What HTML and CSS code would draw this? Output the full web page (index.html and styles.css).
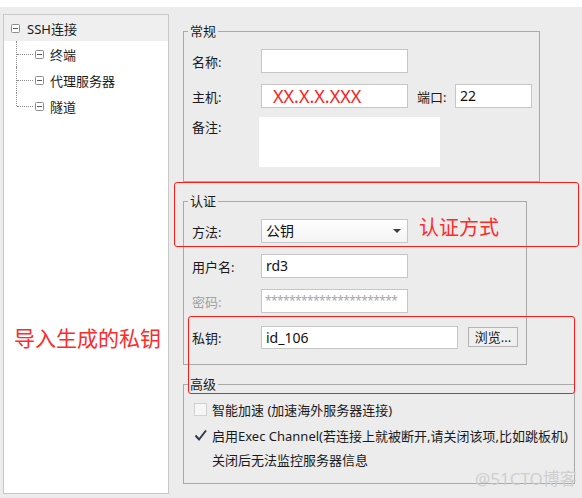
FILE: index.html
```html
<!DOCTYPE html>
<html lang="zh">
<head>
<meta charset="utf-8">
<title>SSH连接</title>
<link rel="stylesheet" href="styles.css">
</head>
<body>
<div class="topbar"></div>
<div class="main">
  <div class="tree">
    <div class="tree-root">
      <svg class="minus" width="9" height="9" viewBox="0 0 9 9"><rect x="0.5" y="0.5" width="8" height="8" rx="1" fill="#fff" stroke="#8c8c8c"/><line x1="2" y1="4.5" x2="7" y2="4.5" stroke="#5a5a5a"/></svg>
      <span>SSH连接</span>
    </div>
    <div class="tree-child">
      <svg class="minus" width="9" height="9" viewBox="0 0 9 9"><rect x="0.5" y="0.5" width="8" height="8" rx="1" fill="#fff" stroke="#8c8c8c"/><line x1="2" y1="4.5" x2="7" y2="4.5" stroke="#5a5a5a"/></svg>
      <span>终端</span>
    </div>
    <div class="tree-child">
      <svg class="minus" width="9" height="9" viewBox="0 0 9 9"><rect x="0.5" y="0.5" width="8" height="8" rx="1" fill="#fff" stroke="#8c8c8c"/><line x1="2" y1="4.5" x2="7" y2="4.5" stroke="#5a5a5a"/></svg>
      <span>代理服务器</span>
    </div>
    <div class="tree-child last">
      <svg class="minus" width="9" height="9" viewBox="0 0 9 9"><rect x="0.5" y="0.5" width="8" height="8" rx="1" fill="#fff" stroke="#8c8c8c"/><line x1="2" y1="4.5" x2="7" y2="4.5" stroke="#5a5a5a"/></svg>
      <span>隧道</span>
    </div>
  </div>

  <div class="settings">
    <fieldset class="group general">
      <legend>常规</legend>
      <div class="rows">
        <div class="row"><span class="label">名称:</span><div class="field"></div></div>
        <div class="row"><span class="label">主机:</span><div class="field host">XX.X.X.XXX</div><span class="label port-label">端口:</span><div class="field port">22</div></div>
        <div class="row note-row"><span class="label">备注:</span><div class="note"></div></div>
      </div>
    </fieldset>

    <fieldset class="group auth">
      <legend>认证</legend>
      <div class="rows">
        <div class="row"><span class="label">方法:</span><div class="field combo"><span>公钥</span><span class="arrow"></span></div></div>
        <div class="row"><span class="label">用户名:</span><div class="field">rd3</div></div>
        <div class="row"><span class="label disabled">密码:</span><div class="field stars">**********************</div></div>
        <div class="row key-row"><span class="label">私钥:</span><div class="field key">id_106</div><div class="button">浏览...</div></div>
      </div>
    </fieldset>

    <fieldset class="group adv">
      <legend>高级</legend>
      <div class="checks">
        <div class="check-row first"><span class="box"></span><span>智能加速 (加速海外服务器连接)</span></div>
        <div class="check-row"><span class="box checked"><svg width="13" height="13" viewBox="0 0 13 13"><path d="M1.5 6.5 L5 10.5 L12 1.5" fill="none" stroke="#2d3b4c" stroke-width="2"/></svg></span><span>启用Exec Channel(若连接上就被断开,请关闭该项,比如跳板机)</span></div>
        <div class="check-row note-line"><span>关闭后无法监控服务器信息</span></div>
      </div>
    </fieldset>
  </div>
</div>

<div class="mark mark-auth"></div>
<div class="mark mark-key"></div>
<div class="anno anno-auth">认证方式</div>
<div class="anno anno-key">导入生成的私钥</div>
<div class="watermark">@51CTO博客</div>
</body>
</html>
```
FILE: styles.css
```css
body {
  margin: 0;
  width: 582px;
  height: 498px;
  overflow: hidden;
  position: relative;
  background: #ececec;
  font-family: "Noto Sans", "Noto Sans CJK SC", sans-serif;
  font-size: 13px;
  color: #1a1a1a;
}

.topbar {
  height: 7px;
  background: #fff;
}

.main {
  display: flex;
  align-items: flex-start;
  padding: 7px 0 0 3px;
}

/* tree */
.tree {
  width: 164px;
  height: 478px;
  background: #fff;
  border: 1px solid #c8c8c8;
}

.tree-root {
  height: 26px;
  display: flex;
  align-items: center;
  gap: 7px;
  padding-left: 7px;
  background: #efefef;
}

.tree-child {
  height: 26px;
  display: flex;
  align-items: center;
  gap: 6px;
  padding-left: 31px;
  position: relative;
}

.tree-child::before {
  content: "";
  position: absolute;
  left: 12px;
  top: 0;
  height: 100%;
  border-left: 1px dotted #8c8c8c;
}

.tree-child.last::before {
  height: 50%;
}

.tree-child::after {
  content: "";
  position: absolute;
  left: 13px;
  top: 50%;
  width: 16px;
  border-top: 1px dotted #8c8c8c;
}

.minus {
  display: block;
  flex: none;
}

/* settings */
.settings {
  margin-left: 14px;
  padding-top: 8px;
  display: flex;
  flex-direction: column;
  gap: 10px;
}

.group {
  box-sizing: border-box;
  margin: 0;
  padding: 0 0 0 8px;
  border: 1px solid #a9a9a9;
  min-width: 0;
}

.group legend {
  padding: 0 2px;
  margin-left: -4px;
  line-height: 18px;
  font-size: 13px;
}

.general { width: 357px; }
.auth { width: 344px; }
.adv { width: 392px; }

.rows {
  display: flex;
  flex-direction: column;
  gap: 11px;
  padding: 9px 0 14px;
}

.auth .rows {
  padding-bottom: 15px;
}

.row {
  display: flex;
  align-items: center;
  height: 24px;
}

.label {
  width: 69px;
  flex: none;
}

.label.disabled {
  color: #a0a0a0;
}

.field {
  box-sizing: border-box;
  width: 147px;
  height: 24px;
  border: 1px solid #c6c6c6;
  background: #fff;
  padding: 0 4px;
  line-height: 22px;
  font-size: 14px;
  color: #111;
  white-space: nowrap;
  overflow: hidden;
}

.field.host {
  color: #ff2020;
  font-size: 18px;
  padding-left: 11px;
}

.port-label {
  width: 38px;
  margin-left: 9px;
}

.field.port {
  width: 77px;
}

.note-row {
  height: 50px;
  align-items: flex-start;
  margin-top: -2px;
}

.note-row .label {
  line-height: 20px;
}

.note {
  width: 181px;
  height: 50px;
  margin-left: -2px;
  background: #fff;
}

.combo {
  display: flex;
  align-items: center;
  justify-content: space-between;
  background: linear-gradient(#ffffff, #f4f4f4);
}

.arrow {
  width: 0;
  height: 0;
  border-left: 4px solid transparent;
  border-right: 4px solid transparent;
  border-top: 4px solid #3c3c3c;
  margin-right: 2px;
}

.stars {
  color: #a8a8a8;
  font-size: 12px;
  letter-spacing: -0.6px;
  padding-left: 3px;
}

.key-row {
  margin-top: 1px;
}

.field.key {
  width: 197px;
  height: 23px;
}

.button {
  box-sizing: border-box;
  margin-left: 10px;
  width: 50px;
  height: 20px;
  border: 1px solid #b4b4b4;
  background: #efefef;
  font-size: 13px;
  line-height: 18px;
  text-align: center;
}

/* advanced */
.checks {
  display: flex;
  flex-direction: column;
  padding: 4px 0 12px;
}

.check-row {
  display: flex;
  align-items: center;
  height: 24px;
  gap: 5px;
  white-space: nowrap;
}

.check-row.first {
  margin-bottom: 2px;
}

.box {
  box-sizing: border-box;
  width: 13px;
  height: 13px;
  margin-left: 2px;
  border: 1px solid #d2d2d2;
  background: #f6f6f6;
  flex: none;
  display: flex;
}

.box.checked {
  border: none;
  background: transparent;
}

.note-line {
  padding-left: 20px;
}

/* annotations layered over the dialog */
.mark {
  position: absolute;
  border: 1px solid #ff1a1a;
  border-radius: 3px;
}

.mark-auth {
  left: 174px;
  top: 182px;
  width: 403px;
  height: 63px;
}

.mark-key {
  left: 188px;
  top: 316px;
  width: 385px;
  height: 76px;
}

.anno {
  position: absolute;
  color: #ff2a2a;
  line-height: 28px;
  white-space: nowrap;
}

.anno-auth {
  left: 419px;
  top: 214px;
  font-size: 20px;
}

.anno-key {
  left: 14px;
  top: 324px;
  font-size: 21px;
}

.watermark {
  position: absolute;
  left: 475px;
  top: 467px;
  font-size: 17px;
  line-height: 24px;
  color: #cfcfcf;
  white-space: nowrap;
}
```
